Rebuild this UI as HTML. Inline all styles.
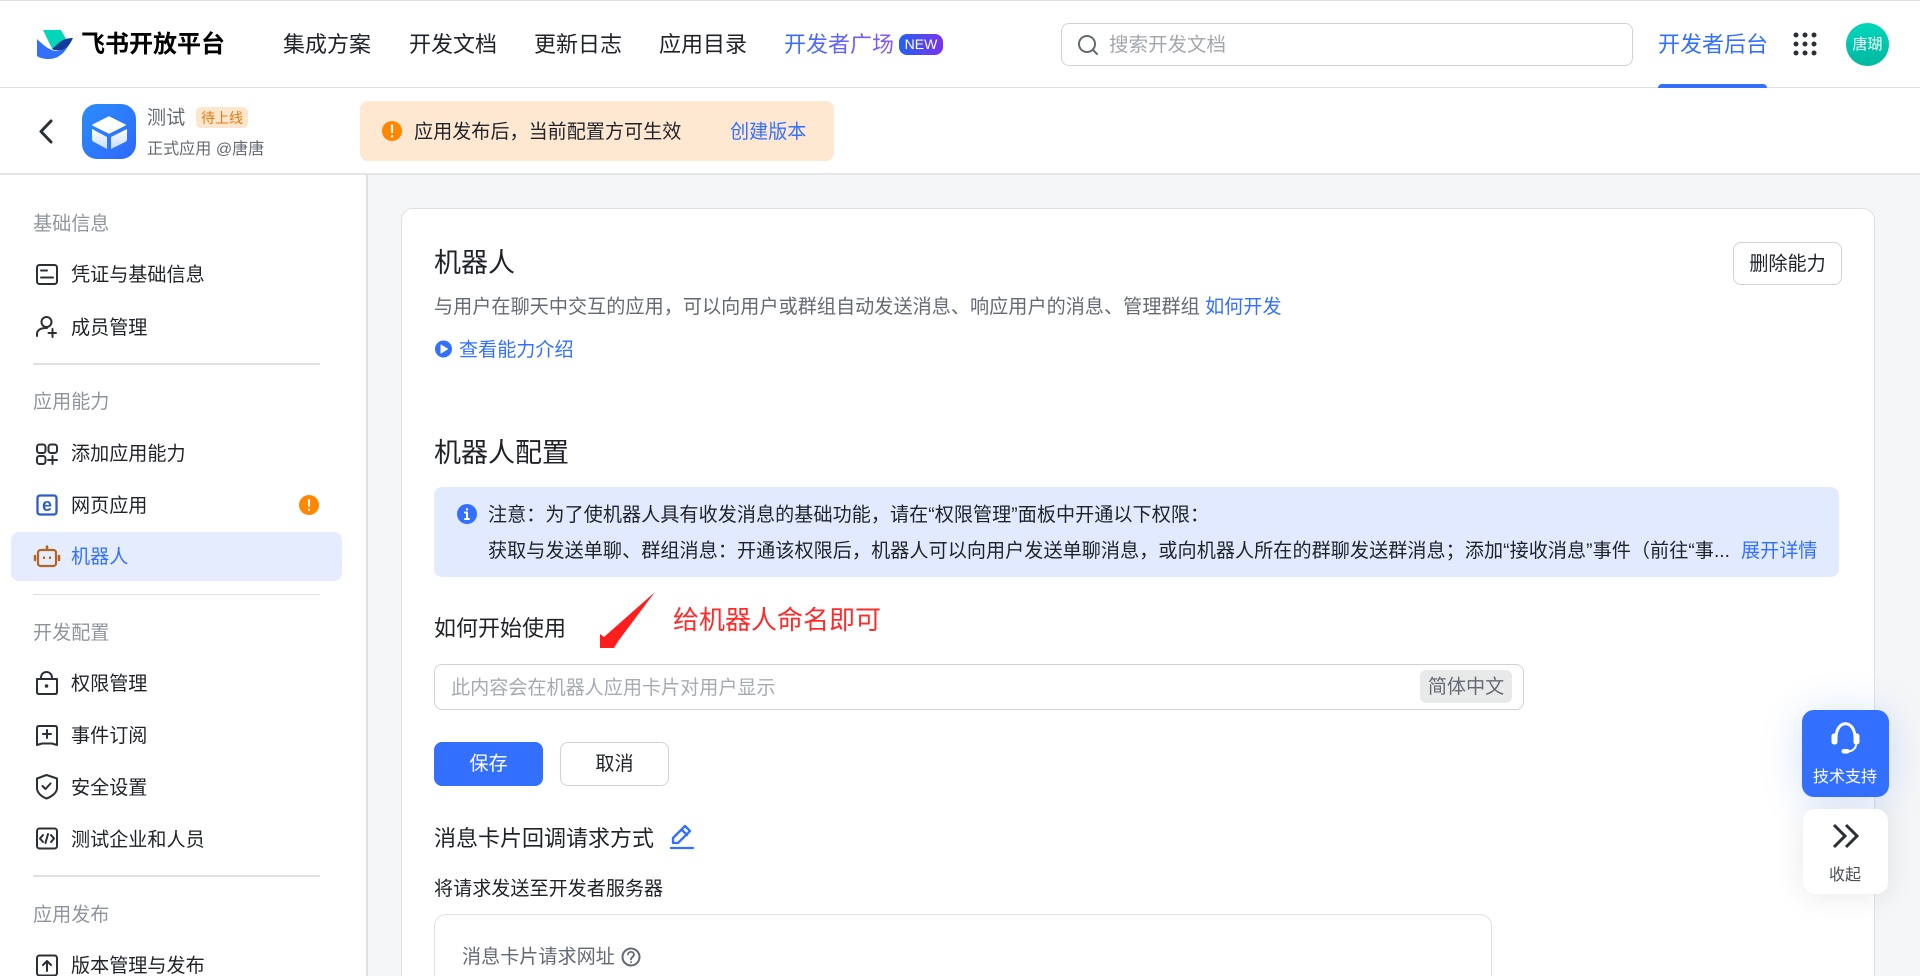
<!DOCTYPE html>
<html lang="zh-CN"><head><meta charset="utf-8"><title>飞书开放平台</title>
<style>
*{box-sizing:border-box;margin:0;padding:0}
html,body{width:1920px;height:976px;overflow:hidden;background:#f5f6f7;font-family:"Liberation Sans","Noto Sans CJK SC",sans-serif;color:#1f2329}
#w{position:relative;width:1920px;height:976px;overflow:hidden;background:#f5f6f7}
.b{position:absolute}
.t{position:absolute;white-space:nowrap;line-height:30px;font-size:19.1px;height:30px;margin-top:2px}
.g{color:#8f959e}.s{color:#646a73}.l{color:#3370ff}
.n{font-size:22px}
.o1{margin-top:1px}
svg.o{position:absolute;left:0;top:0;width:1920px;height:976px;pointer-events:none}
</style></head><body><div id="w">
<div class="b" style="left:0;top:0;width:1920px;height:88px;background:#fff;border-top:1px solid #dee0e3;border-bottom:1px solid #dee0e3"></div>
<div class="b" style="left:0;top:88px;width:1920px;height:87px;background:#fff;border-bottom:2px solid #e4e5e7"></div>
<div class="b" style="left:0;top:175px;width:368px;height:801px;background:#fff;border-right:2px solid #dee0e3"></div>

<div class="t o1" style="left:81px;top:29px;font-size:24px;font-weight:700;color:#000">飞书开放平台</div>
<div class="t n o1" style="left:283px;top:29px">集成方案</div>
<div class="t n o1" style="left:409px;top:29px">开发文档</div>
<div class="t n o1" style="left:534px;top:29px">更新日志</div>
<div class="t n o1" style="left:659px;top:29px">应用目录</div>
<div class="t n o1" style="left:784px;top:29px;background:linear-gradient(90deg,#3370ff,#8a55f0);-webkit-background-clip:text;background-clip:text;color:transparent">开发者广场</div>
<div class="b" style="left:899px;top:34px;width:44px;height:21px;border-radius:8px;background:linear-gradient(90deg,#2560f0,#7a33ee);color:#fff;font-size:14px;line-height:21px;text-align:center">NEW</div>
<div class="b" style="left:1061px;top:23px;width:572px;height:43px;background:#fff;border:1px solid #d0d3d6;border-radius:8px"></div>
<div class="t o1" style="left:1109px;top:29px;font-size:19.5px;color:#a3a7ad">搜索开发文档</div>
<div class="t n o1" style="left:1658px;top:29px;color:#3370ff">开发者后台</div>
<div class="b" style="left:1658px;top:84px;width:109px;height:4px;background:#3370ff;border-radius:4px 4px 0 0"></div>
<div class="b" style="left:1846px;top:23px;width:43px;height:43px;border-radius:50%;background:linear-gradient(180deg,#00d6b9,#00b8a0);color:#fff;font-size:15px;line-height:43px;text-align:center">唐瑚</div>

<div class="t s o1" style="left:147px;top:103px">测试</div>
<div class="b" style="left:196px;top:107px;width:52px;height:21px;border-radius:5px;background:#fde6ce;color:#e37a10;font-size:14px;line-height:22px;text-align:center">待上线</div>
<div class="t s o1" style="left:147px;top:133px;font-size:16.1px">正式应用 @唐唐</div>
<div class="b" style="left:360px;top:101px;width:474px;height:60px;background:#fee8d2;border-radius:8px"></div>
<div class="t" style="left:414px;top:116px">应用发布后，当前配置方可生效</div>
<div class="t l" style="left:730px;top:116px">创建版本</div>

<div class="b" style="left:33px;top:363px;width:287px;height:2px;background:#dee0e3"></div>
<div class="b" style="left:33px;top:594px;width:287px;height:1px;background:#dee0e3"></div>
<div class="b" style="left:33px;top:875px;width:287px;height:2px;background:#dee0e3"></div>
<div class="b" style="left:11px;top:532px;width:331px;height:49px;background:#e5ecfe;border-radius:8px"></div>
<div class="t g" style="left:33px;top:208px">基础信息</div>
<div class="t" style="left:71px;top:259px">凭证与基础信息</div>
<div class="t" style="left:71px;top:312px">成员管理</div>
<div class="t g" style="left:33px;top:386px">应用能力</div>
<div class="t" style="left:71px;top:438px">添加应用能力</div>
<div class="t" style="left:71px;top:490px">网页应用</div>
<div class="t l" style="left:71px;top:541px">机器人</div>
<div class="t g" style="left:33px;top:617px">开发配置</div>
<div class="t" style="left:71px;top:668px">权限管理</div>
<div class="t" style="left:71px;top:720px">事件订阅</div>
<div class="t" style="left:71px;top:772px">安全设置</div>
<div class="t" style="left:71px;top:824px">测试企业和人员</div>
<div class="t g" style="left:33px;top:899px">应用发布</div>
<div class="t" style="left:71px;top:950px">版本管理与发布</div>

<div class="b" style="left:401px;top:208px;width:1474px;height:790px;background:#fff;border:1px solid #dee0e3;border-radius:12px"></div>
<div class="t o1" style="left:434px;top:247px;font-size:27px">机器人</div>
<div class="b" style="left:1733px;top:242px;width:109px;height:43px;border:1px solid #d0d3d6;border-radius:8px;background:#fff;font-size:19.1px;line-height:43px;text-align:center">删除能力</div>
<div class="t s" style="left:434px;top:291px;letter-spacing:.05px">与用户在聊天中交互的应用，可以向用户或群组自动发送消息、响应用户的消息、管理群组 <span class="l">如何开发</span></div>
<div class="t l" style="left:459px;top:334px">查看能力介绍</div>
<div class="t o1" style="left:434px;top:437px;font-size:27px">机器人配置</div>
<div class="b" style="left:434px;top:487px;width:1405px;height:90px;background:#e1eaff;border-radius:8px"></div>
<div class="t" style="left:488px;top:499px;letter-spacing:.05px">注意：为了使机器人具有收发消息的基础功能，请在“权限管理”面板中开通以下权限：</div>
<div class="t" style="left:488px;top:535px;letter-spacing:.06px">获取与发送单聊、群组消息：开通该权限后，机器人可以向用户发送单聊消息，或向机器人所在的群聊发送群消息；添加“接收消息”事件（前往“事...</div>
<div class="t l" style="left:1741px;top:535px">展开详情</div>
<div class="t o1" style="left:434px;top:613px;font-size:22px">如何开始使用</div>
<div class="t o1" style="left:673px;top:604px;font-size:26px;color:#ff2a2a">给机器人命名即可</div>
<div class="b" style="left:434px;top:664px;width:1090px;height:46px;border:1px solid #d0d3d6;border-radius:8px;background:#fff"></div>
<div class="t" style="left:451px;top:672px;color:#a6abb3">此内容会在机器人应用卡片对用户显示</div>
<div class="b" style="left:1420px;top:670px;width:92px;height:33px;background:#e8eaea;border-radius:6px;color:#646a73;font-size:19.1px;line-height:35px;text-align:center">简体中文</div>
<div class="b" style="left:434px;top:742px;width:109px;height:44px;background:#3370ff;border-radius:8px;color:#fff;font-size:19.1px;line-height:46px;text-align:center">保存</div>
<div class="b" style="left:560px;top:742px;width:109px;height:44px;border:1px solid #d0d3d6;background:#fff;border-radius:8px;font-size:19.1px;line-height:44px;text-align:center">取消</div>
<div class="t o1" style="left:434px;top:823px;font-size:22px">消息卡片回调请求方式</div>
<div class="t" style="left:434px;top:873px">将请求发送至开发者服务器</div>
<div class="b" style="left:434px;top:914px;width:1058px;height:90px;border:1px solid #dee0e3;border-radius:12px;background:#fff"></div>
<div class="t s o1" style="left:462px;top:942px">消息卡片请求网址</div>

<div class="b" style="left:1802px;top:710px;width:87px;height:87px;background:#3370ff;border-radius:12px;box-shadow:0 4px 40px rgba(51,112,255,.22)"></div>
<div class="t o1" style="left:1813px;top:762px;font-size:16px;color:#fff">技术支持</div>
<div class="b" style="left:1803px;top:809px;width:85px;height:85px;background:#fff;border-radius:12px;box-shadow:0 2px 30px rgba(31,35,41,.1)"></div>
<div class="t" style="left:1829px;top:859px;font-size:16px;color:#4c5058">收起</div>

<svg class="o" viewBox="0 0 1920 976" fill="none" stroke-linecap="round" stroke-linejoin="round">
<defs>
<linearGradient id="ai" x1="0" y1="0" x2="1" y2="1"><stop offset="0" stop-color="#2a8dfb"/><stop offset="1" stop-color="#2f68ff"/></linearGradient>
<linearGradient id="cu" x1="0" y1="0" x2="0" y2="1"><stop offset="0" stop-color="#fff"/><stop offset="1" stop-color="#c8dcfd"/></linearGradient>
</defs>
<path d="M43 30H61L66 39L58 46L53 50C49 43 46 36 43 30Z" fill="#00d6b9"/>
<path d="M37 39C43 45 50 51 57 51C63 50 66 47 69 44C65 53 58 59 49 59C44 59 40 58 37 56Z" fill="#3370ff"/>
<path d="M52 49L60 42C64 39 68 38 73 38C71 42 69 46 66 48C61 51 56 51 52 49Z" fill="#133c9a"/>
<circle cx="1087" cy="44" r="8" stroke="#646a73" stroke-width="2"/><path d="M1093 50L1097 54" stroke="#646a73" stroke-width="2"/>
<g fill="#2b2f36"><circle cx="1796" cy="35" r="2.5"/><circle cx="1805" cy="35" r="2.5"/><circle cx="1814" cy="35" r="2.5"/><circle cx="1796" cy="44" r="2.5"/><circle cx="1805" cy="44" r="2.5"/><circle cx="1814" cy="44" r="2.5"/><circle cx="1796" cy="53" r="2.5"/><circle cx="1805" cy="53" r="2.5"/><circle cx="1814" cy="53" r="2.5"/></g>
<path d="M51 121L41 131.500L51 142" stroke="#2b2f36" stroke-width="3"/>
<rect x="82" y="104" width="54" height="55" rx="15" fill="url(#ai)"/>
<path d="M109 117L125 125L109 133L93 125Z" fill="#fff" stroke="#fff" stroke-width="1.5"/>
<path d="M92 129L107 137V149L94 142Q92 141 92 139Z" fill="url(#cu)"/><path d="M127 129L111 137V149L125 142Q127 141 127 139Z" fill="url(#cu)"/>
<circle cx="392" cy="131" r="10" fill="#ff8800"/><path d="M392 125.500V132M392 136V136.500" stroke="#fff" stroke-width="2.200"/>
<g stroke="#2b2f36" stroke-width="2">
<rect x="37" y="265" width="20" height="19" rx="2.500"/><path d="M41 270.500H47M41 277.500H53"/>
<circle cx="46.500" cy="322" r="5"/><path d="M37 336V334C37 330 41 328 46 328H47M48.500 333H56M52.500 329V337"/>
<rect x="37" y="444.500" width="8.500" height="8.500" rx="2.500"/><rect x="48.500" y="444.500" width="8.500" height="8.500" rx="2.500"/><rect x="37" y="456" width="8.500" height="8" rx="2.500"/><path d="M48 460H57M52.500 456V464"/>
<path d="M37 679H57V692Q57 694 55 694H39Q37 694 37 692ZM41 678C41 670 52 670 52 678"/>
<path d="M39 726H55Q57 726 57 728V745L52 743.500H42L37 745V728Q37 726 39 726ZM47 730V738M43 734H51"/>
<path d="M46.500 775L57 778.500V788C57 793 51 797 46.500 798.500C42 797 37 793 37 788V778.500Z"/><path d="M42.500 786L45.500 789L50.500 783.500"/>
<rect x="37" y="828.500" width="20" height="20" rx="2.500"/><path d="M43 835L40 838.500L43 842M51 835L54 838.500L51 842M48 834L45.500 843"/>
<rect x="37" y="955.500" width="20" height="20" rx="2.500"/><path d="M47 971V961M43 965L47 961L51 965"/>
</g>
<circle cx="46.500" cy="686" r="1.800" fill="#2b2f36"/>
<rect x="37.500" y="495.500" width="19" height="19" rx="2.500" stroke="#2c5cc5" stroke-width="2.300"/>
<text x="47" y="511" text-anchor="middle" font-family="Liberation Sans" font-size="18" font-weight="700" fill="#2c5cc5">e</text>
<circle cx="309" cy="505" r="10" fill="#ff8800"/><path d="M309 500V506M309 509.500V510" stroke="#fff" stroke-width="2"/>
<g stroke="#b5651d">
<rect x="38" y="550" width="18" height="16" rx="2.500" stroke-width="2.200"/><path d="M47 546.500V549" stroke-width="2.500"/><path d="M35 556V560M59 556V560" stroke-width="2.500"/><path d="M44 557.500V558M50 557.500V558" stroke-width="2.200"/>
</g>
<circle cx="443.500" cy="349" r="8.500" fill="#3370ff"/><path d="M441 345L447.500 349L441 353Z" fill="#fff" stroke="#fff"/>
<circle cx="467" cy="514" r="10" fill="#3370ff"/><path d="M467 512.500V519M467 509V509.500M465 512.500H467M465 519H469" stroke="#fff" stroke-width="2"/>
<path d="M655 592L619 640L614 648H600V634L604 637Z" fill="#ff1e1e" stroke="none"/>
<path d="M673 843V838L685 826L690 831L678 843ZM682 830L687 835" stroke="#3370ff" stroke-width="2.300"/><path d="M671 848H693" stroke="#3370ff" stroke-width="2.300"/>
<circle cx="631" cy="957" r="8.500" stroke="#646a73" stroke-width="2"/><path d="M628 954.500C628 951 634 951 634 954.500C634 957 631 957 631 959.500M631 962V962.300" stroke="#646a73" stroke-width="1.800"/>
<path d="M1836 738C1836 719 1855 719 1855 738" stroke="#fff" stroke-width="3"/>
<rect x="1832" y="734" width="5" height="10" rx="2" fill="#fff" stroke="#fff"/><rect x="1854" y="734" width="5" height="10" rx="2" fill="#fff" stroke="#fff"/>
<path d="M1856 744C1856 749 1852 751 1848 751.500" stroke="#fff" stroke-width="2"/><rect x="1842" y="749.500" width="7" height="3.500" rx="1.700" fill="#fff" stroke="#fff"/>
<path d="M1834 825L1845 836L1834 847M1846 825L1857 836L1846 847" stroke="#2b2f36" stroke-width="3" stroke-linecap="butt" stroke-linejoin="miter"/>
</svg>
</div></body></html>
